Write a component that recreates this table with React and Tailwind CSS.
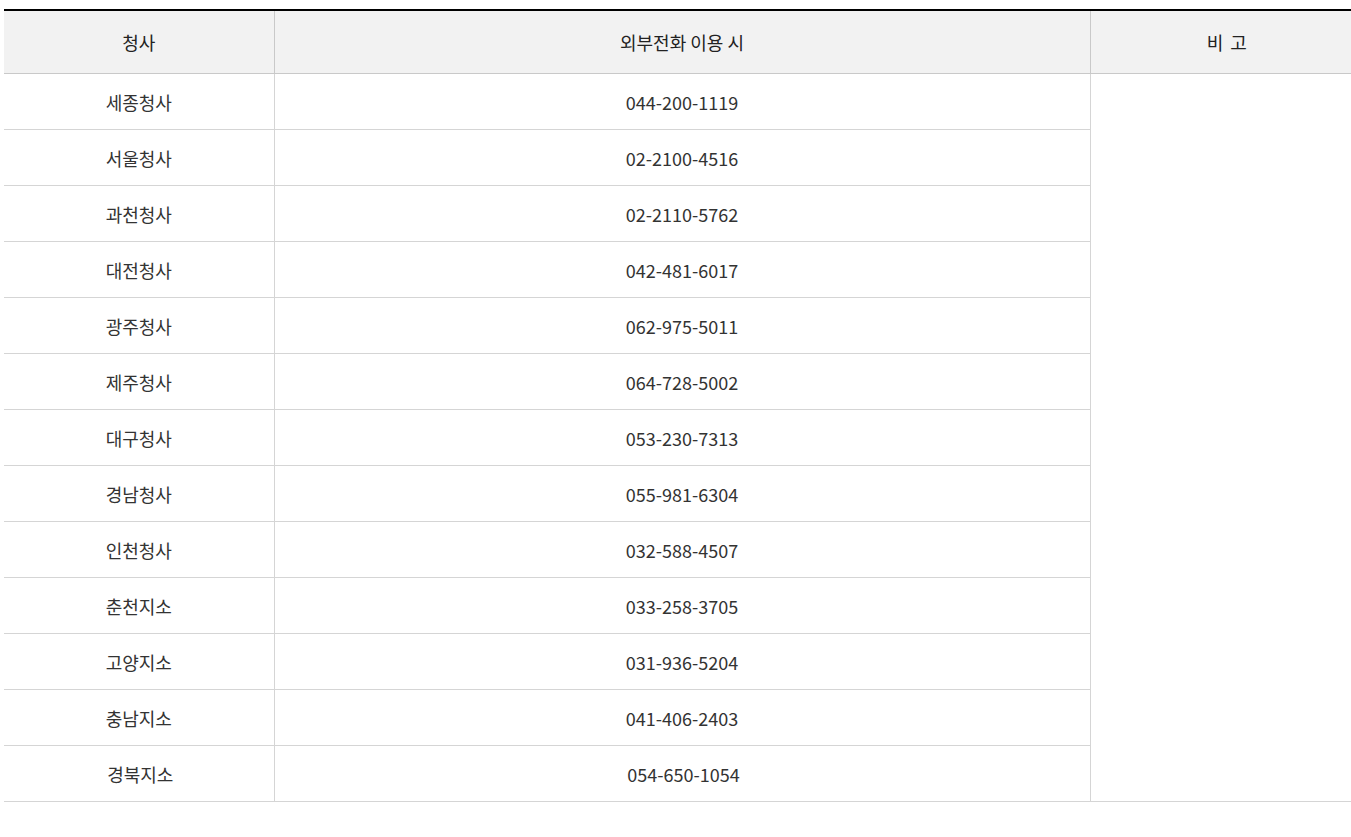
const rows = [
  ['세종청사', '044-200-1119'],
  ['서울청사', '02-2100-4516'],
  ['과천청사', '02-2110-5762'],
  ['대전청사', '042-481-6017'],
  ['광주청사', '062-975-5011'],
  ['제주청사', '064-728-5002'],
  ['대구청사', '053-230-7313'],
  ['경남청사', '055-981-6304'],
  ['인천청사', '032-588-4507'],
  ['춘천지소', '033-258-3705'],
  ['고양지소', '031-936-5204'],
  ['충남지소', '041-406-2403'],
  ['경북지소', '054-650-1054'],
];

export default function App() {
  return (
    <div className="bg-white w-[1351px] min-h-[837px] pt-[9px] pl-[4px] font-['Noto_Sans_CJK_KR','Noto_Sans',sans-serif]">
      <table className="w-[1347px] border-collapse table-fixed border-t-2 border-t-black text-[18px] leading-[26px]">
        <colgroup>
          <col className="w-[270px]" />
          <col className="w-[816px]" />
          <col />
        </colgroup>
        <thead>
          <tr className="h-[63px] bg-[#f2f2f2] text-[#222]">
            <th className="font-normal border-b border-[#c9c9c9] pt-[1px]">청사</th>
            <th className="font-normal border-b border-l border-[#c9c9c9] pt-[1px]">외부전화 이용 시</th>
            <th className="font-normal border-b border-l border-[#c9c9c9] pt-[1px] pl-[12px]">
              비<span className="inline-block w-[7px]"> </span>고
            </th>
          </tr>
        </thead>
        <tbody className="text-[#333]">
          {rows.map(([name, tel], i) => (
            <tr key={name} className="h-[56px]">
              <td className={`text-center border-b border-[#d5d5d5] pt-[2px] ${i === rows.length - 1 ? 'pl-[3px]' : ''}`}>{name}</td>
              <td className={`text-center border-b border-l border-[#d5d5d5] pt-[2px] ${i === rows.length - 1 ? 'pl-[3px]' : ''}`}>{tel}</td>
              {i === 0 && (
                <td rowSpan={rows.length} className="border-b border-l border-[#d5d5d5]"></td>
              )}
            </tr>
          ))}
        </tbody>
      </table>
    </div>
  );
}
